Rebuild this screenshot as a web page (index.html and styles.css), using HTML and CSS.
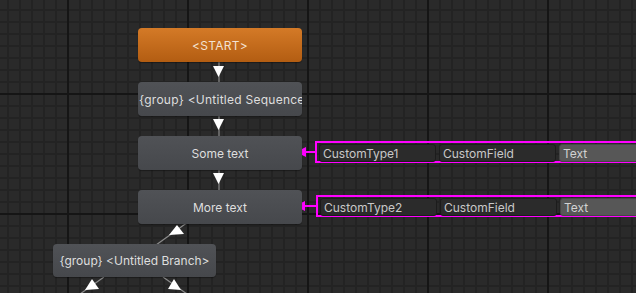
FILE: index.html
```html
<!DOCTYPE html>
<html>
<head>
    <title>Sequence Graph</title>
    <link rel="stylesheet" href="styles.css">
</head>
<body>
    <div id="canvas" class="grid">
        <svg class="edges" width="636" height="293" viewBox="0 0 636 293">
            <!-- start -> sequence -->
            <line x1="219" y1="62" x2="219" y2="82" class="edge"/>
            <polygon points="213,66 224,66 218.5,77" class="tri"/>
            <!-- sequence -> some text -->
            <line x1="219" y1="116" x2="219" y2="136" class="edge"/>
            <polygon points="213,119 224,119 218.5,130" class="tri"/>
            <!-- some text -> more text -->
            <line x1="219" y1="170" x2="219" y2="190" class="edge"/>
            <polygon points="213,173 224,173 218.5,184" class="tri"/>
            <!-- more text <-> branch -->
            <line x1="188" y1="222" x2="156" y2="245" class="edge"/>
            <polygon points="177,225 169,235 184,234" class="tri"/>
            <!-- branch children -->
            <line x1="104" y1="277" x2="80" y2="294" class="edge"/>
            <polygon points="92,279 85,290 99,289" class="tri"/>
            <line x1="163" y1="277" x2="187" y2="294" class="edge"/>
            <polygon points="174,279 168,289 181,290" class="tri"/>
            <!-- field links -->
            <line x1="305" y1="152" x2="316" y2="152" class="link"/>
            <polygon points="296,152 306,147 306,157" class="mtri"/>
            <line x1="305" y1="206" x2="317" y2="206" class="link"/>
            <polygon points="295,206 305,201 305,211" class="mtri"/>
        </svg>

        <div class="node start" style="left:138px; top:28px;">&lt;START&gt;</div>
        <div class="node clip" style="left:138px; top:82px;">{group} &lt;Untitled Sequence&gt;</div>
        <div class="node" style="left:138px; top:136px;">Some text</div>
        <div class="node" style="left:138px; top:190px;">More text</div>
        <div class="node branch" style="left:53px; top:244px;">{group} &lt;Untitled Branch&gt;</div>

        <div class="fields" style="left:315px; top:141px;">
            <span class="fld">CustomType1</span>
            <span class="fld">CustomField</span>
            <span class="fld val">Text</span>
        </div>
        <div class="fields" style="left:316px; top:195px;">
            <span class="fld">CustomType2</span>
            <span class="fld">CustomField</span>
            <span class="fld val">Text</span>
        </div>
    </div>
</body>
</html>
```
FILE: styles.css
```css
* {
    padding: 0px;
    margin: 0px;
    box-sizing: border-box;
}
body {
    background-color: #2a2a2a;
    font-family: Inter, "Noto Sans", sans-serif;
    font-size: 12px;
    overflow: hidden;
}
#canvas {
    position: relative;
    width: 636px;
    height: 293px;
    overflow: hidden;
}
.grid {
    background-color: #2a2a2a;
    background-image:
        linear-gradient(to right, #151515 2px, transparent 2px),
        linear-gradient(to bottom, #151515 2px, transparent 2px),
        linear-gradient(to right, #232323 2px, transparent 2px),
        linear-gradient(to bottom, #232323 2px, transparent 2px);
    background-size: 120px 120px, 120px 120px, 12px 12px, 12px 12px;
    background-position: 67px 0, 0 93px, 7px 0, 0 9px;
}
.edges {
    position: absolute;
    left: 0;
    top: 0;
}
.edge {
    stroke: #8c8c8c;
    stroke-width: 1.2;
}
.tri {
    fill: #ffffff;
}
.link {
    stroke: #ff00ff;
    stroke-width: 2;
}
.mtri {
    fill: #ff00ff;
}
.node {
    position: absolute;
    width: 164px;
    height: 34px;
    border-radius: 4px;
    background: linear-gradient(#505256, #46484c);
    box-shadow: 0 1px 1px rgba(0, 0, 0, 0.35);
    color: #dedede;
    display: flex;
    align-items: center;
    justify-content: center;
    white-space: nowrap;
    overflow: hidden;
}
.node.clip {
    justify-content: flex-start;
    padding-left: 1px;
    letter-spacing: 0.25px;
}
.node.start {
    background: linear-gradient(#d47a27, #b35d12);
    color: #f3e2d2;
    letter-spacing: 0.3px;
}
.node.branch {
    width: 163px;
    height: 33px;
}
.fields {
    position: absolute;
    display: flex;
    gap: 3px;
    width: 340px;
    height: 22px;
    padding: 1px 2px;
    border: 2px solid #ff00ff;
    border-right: none;
}
.fld {
    height: 18px;
    width: 117px;
    flex: none;
    padding-left: 3px;
    line-height: 17px;
    color: #c8c8c8;
    background-color: #2b2b2b;
    border: 1px solid #1c1c1c;
    border-radius: 3px;
    white-space: nowrap;
}
.fld.val {
    width: 100px;
    background-color: #575757;
    border-color: #454545;
    color: #d2d2d2;
}
```
